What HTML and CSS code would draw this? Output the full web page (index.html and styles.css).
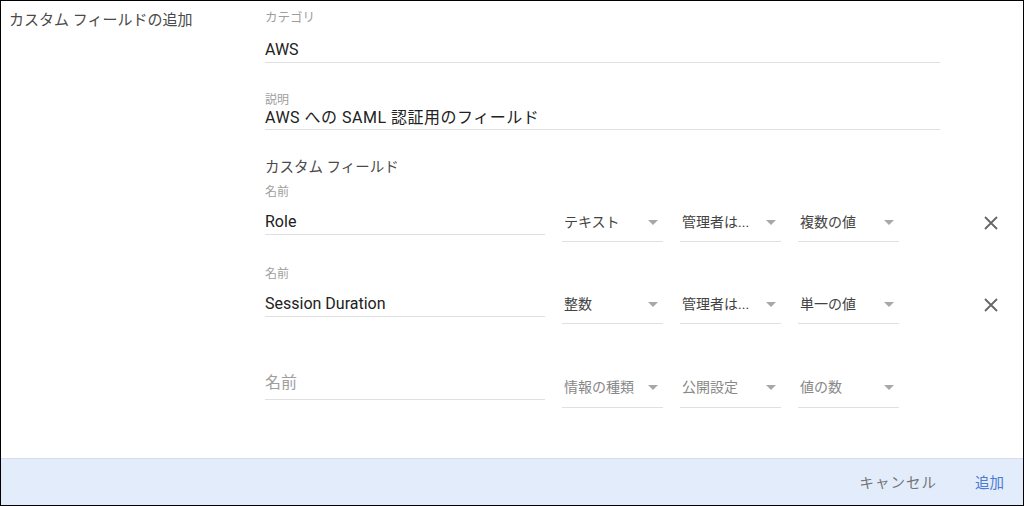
FILE: index.html
```html
<!DOCTYPE html>
<html>
    <head>
        <title>カスタム フィールドの追加</title>
        <link rel="stylesheet" href="styles.css">
    </head>
    <body>
        <div class="dialog">
            <div class="main">
                <div class="side">
                    <div class="sideTitle">カスタム フィールドの追加</div>
                </div>
                <div class="content">
                    <div class="field">
                        <div class="fieldLabel">カテゴリ</div>
                        <div class="fieldValue">AWS</div>
                    </div>
                    <div class="field fieldDesc">
                        <div class="fieldLabel small">説明</div>
                        <div class="fieldValue tight">AWS への SAML 認証用のフィールド</div>
                    </div>
                    <div class="sectionTitle">カスタム フィールド</div>

                    <div class="row">
                        <div class="rowLabel">名前</div>
                        <div class="controls">
                            <div class="nameInput">Role</div>
                            <div class="select"><span>テキスト</span><i class="arrow"></i></div>
                            <div class="select"><span>管理者は...</span><i class="arrow"></i></div>
                            <div class="select"><span>複数の値</span><i class="arrow"></i></div>
                            <div class="remove">
                                <svg width="14" height="14" viewBox="0 0 14 14"><path d="M1 1L13 13M13 1L1 13" stroke="#666" stroke-width="1.8" fill="none"/></svg>
                            </div>
                        </div>
                    </div>

                    <div class="row">
                        <div class="rowLabel">名前</div>
                        <div class="controls">
                            <div class="nameInput">Session Duration</div>
                            <div class="select"><span>整数</span><i class="arrow"></i></div>
                            <div class="select"><span>管理者は...</span><i class="arrow"></i></div>
                            <div class="select"><span>単一の値</span><i class="arrow"></i></div>
                            <div class="remove">
                                <svg width="14" height="14" viewBox="0 0 14 14"><path d="M1 1L13 13M13 1L1 13" stroke="#666" stroke-width="1.8" fill="none"/></svg>
                            </div>
                        </div>
                    </div>

                    <div class="row rowNew">
                        <div class="controls">
                            <div class="nameInput placeholder">名前</div>
                            <div class="select placeholder"><span>情報の種類</span><i class="arrow"></i></div>
                            <div class="select placeholder"><span>公開設定</span><i class="arrow"></i></div>
                            <div class="select placeholder"><span>値の数</span><i class="arrow"></i></div>
                        </div>
                    </div>
                </div>
            </div>
            <div class="footer">
                <span class="btn cancel">キャンセル</span>
                <span class="btn add">追加</span>
            </div>
        </div>
    </body>
</html>
```

FILE: styles.css
```css
*{
    margin: 0;
    padding: 0;
    box-sizing: border-box;
}
body{
    font-family: Roboto, "Noto Sans CJK JP", sans-serif;
    color: #212121;
    background: #fff;
}
.dialog{
    width: 1024px;
    height: 506px;
    border: 1px solid #000;
    display: flex;
    flex-direction: column;
}
.main{
    flex: 1;
    display: flex;
}
.side{
    width: 264px;
    padding: 9px 0 0 8px;
}
.sideTitle{
    font-size: 15px;
    line-height: 20px;
    color: #4a4a4a;
}
.content{
    flex: 1;
    padding-top: 9px;
}
.field{
    width: 675px;
}
.fieldLabel{
    font-size: 12.5px;
    line-height: 16px;
    color: #9e9e9e;
}
.fieldLabel.small{
    font-size: 12px;
    line-height: 14px;
}
.fieldValue{
    margin-top: 12px;
    font-size: 16px;
    line-height: 24px;
    border-bottom: 1px solid #e0e0e0;
}
.fieldValue.tight{
    margin-top: 0;
    line-height: 22px;
    letter-spacing: 0.5px;
}
.fieldDesc{
    margin-top: 30px;
}
.sectionTitle{
    margin-top: 28px;
    font-size: 14.5px;
    line-height: 20px;
    color: #4a4a4a;
}
.row{
    margin-top: 25px;
}
.sectionTitle + .row{
    margin-top: 7px;
}
.rowLabel{
    font-size: 12px;
    line-height: 14px;
    color: #9e9e9e;
}
.controls{
    margin-top: 11px;
    display: flex;
    align-items: flex-start;
    gap: 17px;
}
.nameInput{
    width: 280px;
    font-size: 16px;
    line-height: 24px;
    border-bottom: 1px solid #e0e0e0;
}
.select{
    width: 101px;
    display: flex;
    justify-content: space-between;
    align-items: center;
    padding: 0 5px 7px 2px;
    font-size: 14px;
    line-height: 24px;
    color: #424242;
    border-bottom: 1px solid #e0e0e0;
}
.select span{
    white-space: nowrap;
}
.arrow{
    width: 0;
    height: 0;
    border-left: 5px solid transparent;
    border-right: 5px solid transparent;
    border-top: 5px solid #a8a8a8;
}
.remove{
    margin-left: 68px;
    padding-top: 2px;
    height: 24px;
    display: flex;
    align-items: center;
}
.rowNew{
    margin-top: 47px;
}
.rowNew .controls{
    margin-top: 0;
}
.nameInput.placeholder{
    color: #9e9e9e;
    padding-bottom: 4px;
}
.select.placeholder{
    margin-top: 4px;
    padding-bottom: 8px;
    color: #888;
}
.footer{
    height: 47px;
    border-top: 1px solid #d3ddef;
    background: #e3ecfb;
    display: flex;
    justify-content: flex-end;
    align-items: center;
    gap: 38px;
    padding: 3px 19px 0 0;
}
.btn{
    font-size: 14.5px;
    line-height: 20px;
}
.cancel{
    color: #757575;
    letter-spacing: 1px;
}
.add{
    color: #4a7bd4;
}
```
